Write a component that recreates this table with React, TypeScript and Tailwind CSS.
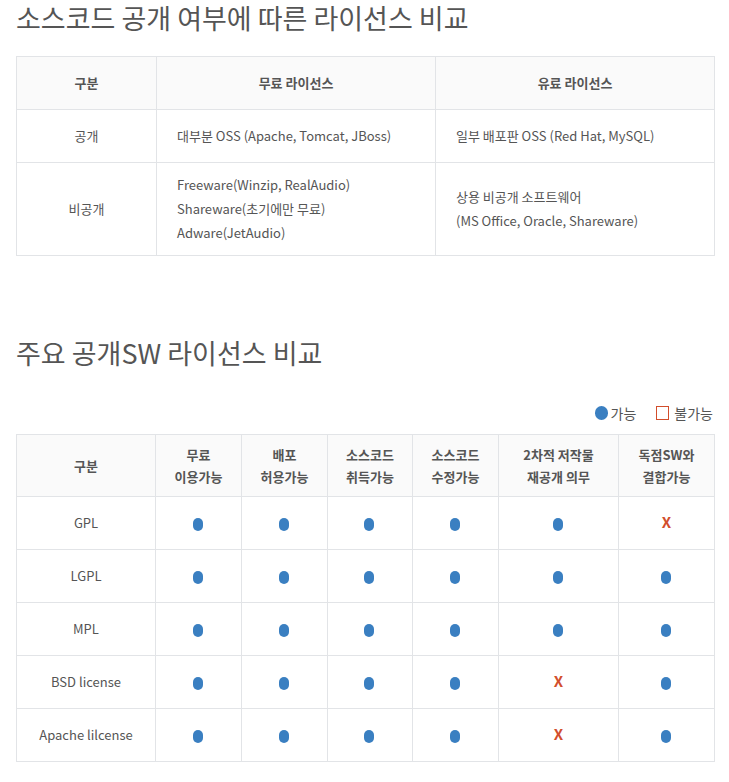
const font = { fontFamily: '"Noto Sans CJK KR", "Noto Sans", sans-serif' };

function Dot() {
  return <span className="inline-block w-[10px] h-[13px] rounded-full bg-[#3a7fc1] align-middle -ml-[2px]" />;
}

function No() {
  return <span className="text-[15px] font-bold text-[#d24e2c] leading-none">X</span>;
}

const rows: { name: string; v: boolean[] }[] = [
  { name: 'GPL', v: [true, true, true, true, true, false] },
  { name: 'LGPL', v: [true, true, true, true, true, true] },
  { name: 'MPL', v: [true, true, true, true, true, true] },
  { name: 'BSD license', v: [true, true, true, true, false, true] },
  { name: 'Apache lilcense', v: [true, true, true, true, false, true] },
];

const heads = [
  ['무료', '이용가능'],
  ['배포', '허용가능'],
  ['소스코드', '취득가능'],
  ['소스코드', '수정가능'],
  ['2차적 저작물', '재공개 의무'],
  ['독점SW와', '결합가능'],
];

const colW = ['w-[139px]', 'w-[86px]', 'w-[86px]', 'w-[85px]', 'w-[86px]', 'w-[120px]', 'w-[96px]'];

export default function App() {
  return (
    <div className="bg-white w-[729px] min-h-[782px] px-4 text-[#555]" style={font}>
      <h2 className="text-[27px] font-normal leading-[36px] text-[#555]">
        소스코드 공개 여부에 따른 라이선스 비교
      </h2>

      <table className="mt-[20px] w-[698px] border-collapse text-[13px] text-[#555] table-fixed">
        <colgroup>
          <col className="w-[140px]" />
          <col className="w-[279px]" />
          <col className="w-[279px]" />
        </colgroup>
        <thead>
          <tr className="h-[53px] bg-[#fafafa]">
            <th className="border border-[#e2e4e7] font-semibold text-center">구분</th>
            <th className="border border-[#e2e4e7] font-semibold text-center">무료 라이선스</th>
            <th className="border border-[#e2e4e7] font-semibold text-center">유료 라이선스</th>
          </tr>
        </thead>
        <tbody>
          <tr className="h-[53px]">
            <td className="border border-[#e2e4e7] text-center">공개</td>
            <td className="border border-[#e2e4e7] pl-5">대부분 OSS (Apache, Tomcat, JBoss)</td>
            <td className="border border-[#e2e4e7] pl-5">일부 배포판 OSS (Red Hat, MySQL)</td>
          </tr>
          <tr className="h-[93px]">
            <td className="border border-[#e2e4e7] text-center">비공개</td>
            <td className="border border-[#e2e4e7] pl-5 leading-[24px]">
              Freeware(Winzip, RealAudio)
              <br />
              Shareware(초기에만 무료)
              <br />
              Adware(JetAudio)
            </td>
            <td className="border border-[#e2e4e7] pl-5 leading-[24px]">
              상용 비공개 소프트웨어
              <br />
              (MS Office, Oracle, Shareware)
            </td>
          </tr>
        </tbody>
      </table>

      <h2 className="mt-[79px] text-[27px] font-normal leading-[36px] text-[#555]">주요 공개SW 라이선스 비교</h2>

      <div className="mt-[31px] flex justify-end items-center gap-[20px] text-[14px] text-[#555] h-[22px]">
        <span className="flex items-center gap-[3px]">
          <span className="inline-block w-[13px] h-[14px] rounded-full bg-[#3a7fc1]" />
          가능
        </span>
        <span className="flex items-center gap-[5px]">
          <span className="inline-block w-[13px] h-[14px] border-[1.5px] border-[#d24e2c]" />
          불가능
        </span>
      </div>

      <table className="mt-[10px] w-[698px] border-collapse text-[13px] text-[#555] table-fixed">
        <colgroup>
          {colW.map((w, i) => (
            <col key={i} className={w} />
          ))}
        </colgroup>
        <thead>
          <tr className="h-[62px] bg-[#fafafa]">
            <th className="border border-[#e2e4e7] font-semibold text-center">구분</th>
            {heads.map((h, i) => (
              <th key={i} className="border border-[#e2e4e7] font-semibold text-center leading-[22px]">
                {h[0]}
                <br />
                {h[1]}
              </th>
            ))}
          </tr>
        </thead>
        <tbody>
          {rows.map((r) => (
            <tr key={r.name} className="h-[53px]">
              <td className="border border-[#e2e4e7] text-center">{r.name}</td>
              {r.v.map((ok, i) => (
                <td key={i} className="border border-[#e2e4e7] text-center">
                  {ok ? <Dot /> : <No />}
                </td>
              ))}
            </tr>
          ))}
        </tbody>
      </table>
    </div>
  );
}
